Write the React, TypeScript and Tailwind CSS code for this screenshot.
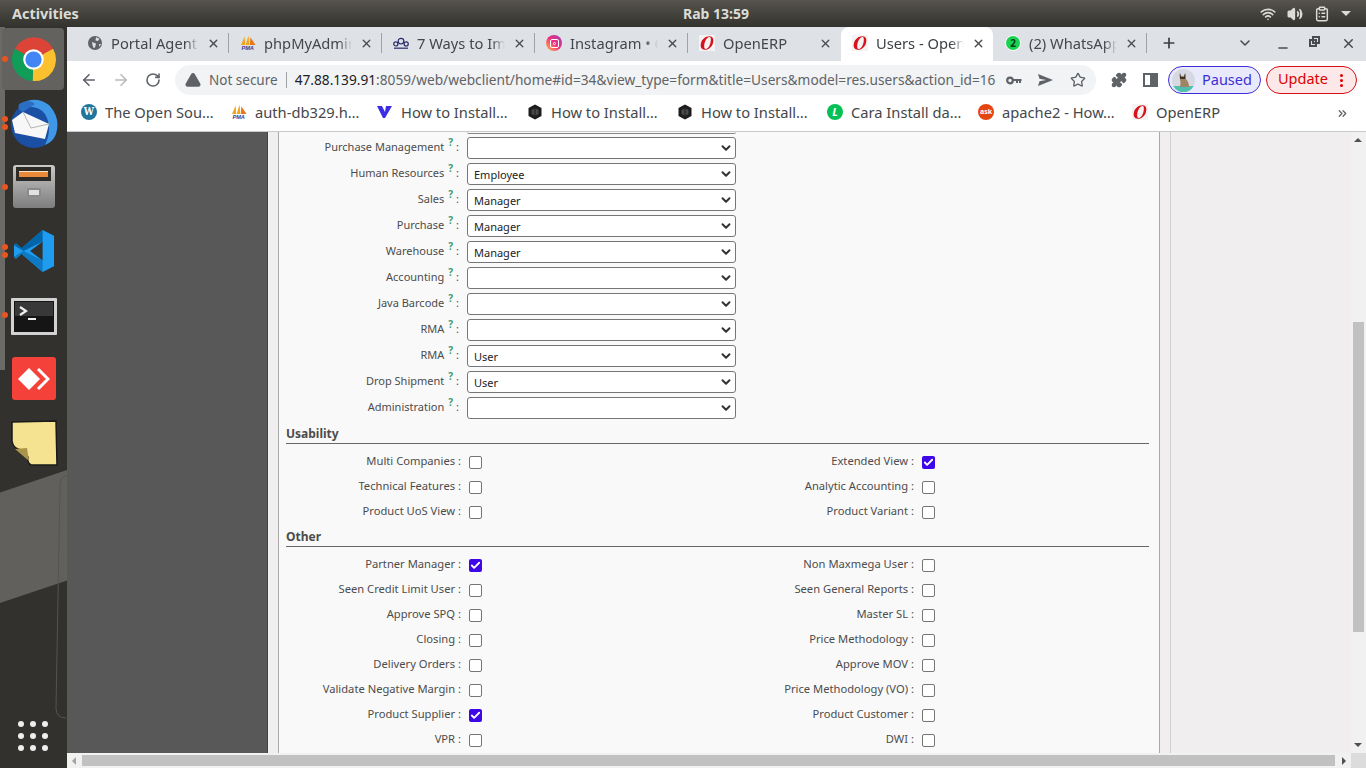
import React from 'react';
import { ArrowLeft, ArrowRight, RotateCw, X, Plus, ChevronDown, Minus, Star, Puzzle, ChevronsRight, TriangleAlert, Wifi, Volume2, ClipboardList, Check } from 'lucide-react';

const font = 'font-["Noto_Sans","Open_Sans",sans-serif]';

const OperaLogo = () => (
    <svg width="16" height="16" viewBox="0 0 16 16" className="shrink-0">
        <rect width="16" height="16" fill="#f3f3f3" />
        <path fillRule="evenodd" fill="#d8111b" d="M10.5 1.2 C14 1.2 15 4.2 14 8 C13 12 9.5 15 6 14.8 C2.2 14.6 1 11.6 2 8 C3 4 6.5 1.2 10.5 1.2Z M10.6 2 C8.6 2 6.6 4.6 5.6 8 C4.8 11 5.2 14 6.6 14 C8.6 14 10.6 11.4 11.4 8 C12.2 5 12 2 10.6 2Z" />
    </svg>
);

const PmaLogo = () => (
    <svg width="16" height="16" viewBox="0 0 17 16" className="shrink-0">
        <path d="M1 10 L5 1 L5.5 10Z M6 10 L9 0 L10 10Z" fill="#f2a51f" />
        <path d="M10.5 10 L11 2 L16.5 10Z" fill="#e8761a" />
        <text x="1.5" y="15.5" fontSize="6" fontWeight="700" fontStyle="italic" fill="#3b3b8c" fontFamily="Liberation Sans, sans-serif">PMA</text>
    </svg>
);

const HexLogo = () => (
    <svg width="16" height="16" viewBox="0 0 15 16" className="shrink-0">
        <path d="M7.5 0.5 L14 4 V12 L7.5 15.5 L1 12 V4Z" fill="#1c1c1c" />
        <path d="M7.5 4 L11 6 V10 L7.5 12 L4 10 V6Z" fill="#4a4a4a" />
        <path d="M7.5 4V12" stroke="#1c1c1c" />
    </svg>
);

const CrownLogo = () => (
    <svg width="16" height="14" viewBox="0 0 17 14" fill="none" stroke="#2b2b6b" strokeWidth="1.3" className="shrink-0">
        <circle cx="8.5" cy="5" r="3" />
        <circle cx="3" cy="8" r="2.2" />
        <circle cx="14" cy="8" r="2.2" />
        <path d="M1 12.5h15" />
    </svg>
);

const GlobeLogo = () => (
    <div className="w-4 flex justify-center shrink-0">
        <svg width="14" height="14" viewBox="0 0 14 14">
            <circle cx="7" cy="7" r="7" fill="#5f6368" />
            <path d="M8 1.2 L11.5 2.8 L10 5 L7.5 4.5Z M4 6 L8 7.5 L7 11.5 L5.5 12 L4.5 9Z M11 8 L13 8 L11.5 11Z" fill="#dee1e6" />
        </svg>
    </div>
);

const InstaLogo = () => (
    <div className="w-4 h-4 rounded-full bg-gradient-to-tr from-[#fdb515] via-[#ee2a7b] to-[#9b36b7] flex items-center justify-center shrink-0">
        <div className="w-[9px] h-[9px] rounded-[2px] border border-white flex items-center justify-center">
            <div className="w-[3px] h-[3px] rounded-full border border-white" />
        </div>
    </div>
);

const WhatsLogo = () => (
    <div className="w-4 h-4 rounded-full bg-[#19d24f] border border-white flex items-center justify-center text-[#0b3d1c] text-[10px] font-bold leading-none shrink-0">2</div>
);

const tabs: { title: string; icon: React.ReactNode; sep?: boolean; active?: boolean }[] = [
    { title: 'Portal Agent', icon: <GlobeLogo />, sep: true },
    { title: 'phpMyAdmin', icon: <PmaLogo />, sep: true },
    { title: '7 Ways to Imp', icon: <CrownLogo />, sep: true },
    { title: 'Instagram • C', icon: <InstaLogo />, sep: true },
    { title: 'OpenERP', icon: <OperaLogo /> },
    { title: 'Users - Open', icon: <OperaLogo />, active: true },
    { title: '(2) WhatsApp', icon: <WhatsLogo />, sep: true },
];

const bookmarks: { title: string; icon: React.ReactNode; width: string }[] = [
    { title: 'The Open Sou…', icon: <div className="w-4 h-4 rounded-full bg-[#21759b] text-white text-[11px] font-bold leading-4 text-center font-serif shrink-0">W</div>, width: 'w-[150px]' },
    { title: 'auth-db329.h…', icon: <PmaLogo />, width: 'w-[146px]' },
    { title: 'How to Install…', icon: <svg width="16" height="14" viewBox="0 0 16 14" className="shrink-0"><path d="M0 1h5l3 6 1-6h6l-7 12H6Z" fill="#3d2ee6" /></svg>, width: 'w-[150px]' },
    { title: 'How to Install…', icon: <HexLogo />, width: 'w-[150px]' },
    { title: 'How to Install…', icon: <HexLogo />, width: 'w-[150px]' },
    { title: 'Cara Install da…', icon: <div className="w-4 h-4 rounded-full bg-[#06bf55] text-white text-[11px] font-bold italic leading-4 text-center shrink-0">L</div>, width: 'w-[151px]' },
    { title: 'apache2 - How…', icon: <div className="w-4 h-4 rounded-full bg-[#e5450f] text-white text-[7px] font-bold leading-4 text-center shrink-0">ask</div>, width: 'w-[154px]' },
    { title: 'OpenERP', icon: <OperaLogo />, width: 'w-[110px]' },
];

const selects = [
    { label: 'Purchase Management', value: '' },
    { label: 'Human Resources', value: 'Employee' },
    { label: 'Sales', value: 'Manager' },
    { label: 'Purchase', value: 'Manager' },
    { label: 'Warehouse', value: 'Manager' },
    { label: 'Accounting', value: '' },
    { label: 'Java Barcode', value: '' },
    { label: 'RMA', value: '' },
    { label: 'RMA', value: 'User' },
    { label: 'Drop Shipment', value: 'User' },
    { label: 'Administration', value: '' },
];

type Box = [string, boolean];

const usability: [Box, Box][] = [
    [['Multi Companies', false], ['Extended View', true]],
    [['Technical Features', false], ['Analytic Accounting', false]],
    [['Product UoS View', false], ['Product Variant', false]],
];

const other: [Box, Box][] = [
    [['Partner Manager', true], ['Non Maxmega User', false]],
    [['Seen Credit Limit User', false], ['Seen General Reports', false]],
    [['Approve SPQ', false], ['Master SL', false]],
    [['Closing', false], ['Price Methodology', false]],
    [['Delivery Orders', false], ['Approve MOV', false]],
    [['Validate Negative Margin', false], ['Price Methodology (VO)', false]],
    [['Product Supplier', true], ['Product Customer', false]],
    [['VPR', false], ['DWI', false]],
];

const Checkbox = ({ checked }: { checked: boolean }) => (
    <div className={`w-[13px] h-[13px] rounded-[2px] flex items-center justify-center ${checked ? 'bg-[#3d07e8]' : 'border border-[#767676] bg-white'}`}>
        {checked && <Check size={11} strokeWidth={4} className="text-white" />}
    </div>
);

const CheckCell = ({ label, checked }: { label: string; checked: boolean }) => (
    <div className="flex items-center h-[25px]">
        <div className="w-[190px] text-right text-[11.2px] text-[#4c4c4c] pr-[8px] -mt-[2px]">{label} :</div>
        <Checkbox checked={checked} />
    </div>
);

const Section = ({ title, rows }: { title: string; rows: [Box, Box][] }) => (
    <div>
        <div className="h-[19px] mr-[10px] ml-[7px] border-b border-[#666] text-[12px] font-bold text-[#4c4c4c] leading-[18px]">{title}</div>
        <div className="pt-[6px]">
            {rows.map(([left, right]) => (
                <div key={left[0]} className="flex">
                    <div className="w-[453px]">
                        <CheckCell label={left[0]} checked={left[1]} />
                    </div>
                    <CheckCell label={right[0]} checked={right[1]} />
                </div>
            ))}
        </div>
    </div>
);

const Dock = () => (
    <div className="w-[67px] shrink-0 bg-[#32312d] flex flex-col items-center relative overflow-hidden">
        <div className="absolute left-0 right-0 top-[443px] h-[133px] bg-[#61605c] [clip-path:polygon(0_17%,100%_0,100%_83%,0_100%)]" />
        <svg width="67" height="260" viewBox="0 0 67 260" fill="none" className="absolute left-0 top-[445px]">
            <path d="M67 4 Q60 4 60 14 L56 236 Q56 246 66 246" stroke="#55544f" />
        </svg>
        <div className="absolute left-0 top-0 h-[343px] w-[5px] bg-[#6b6a66]" />
        <div className="absolute left-[2px] top-[1px] w-[62px] h-[62px] rounded-[4px] bg-[#63625e]" />
        <span className="absolute left-[2px] top-[29px] w-[6px] h-[6px] rounded-full bg-[#e95420]" />
        <span className="absolute left-[2px] top-[89px] w-[6px] h-[6px] rounded-full bg-[#e95420]" />
        <span className="absolute left-[2px] top-[97px] w-[6px] h-[6px] rounded-full bg-[#e95420]" />
        <span className="absolute left-[2px] top-[157px] w-[6px] h-[6px] rounded-full bg-[#e95420]" />
        <span className="absolute left-[2px] top-[217px] w-[6px] h-[6px] rounded-full bg-[#e95420]" />
        <span className="absolute left-[2px] top-[225px] w-[6px] h-[6px] rounded-full bg-[#e95420]" />
        <span className="absolute left-[2px] top-[285px] w-[6px] h-[6px] rounded-full bg-[#e95420]" />

        <svg width="45" height="45" viewBox="0 0 46 46" className="relative mt-[10px]">
            <path d="M23 23 L4 12 A22 22 0 0 1 43 12 Z" fill="#db4437" />
            <path d="M23 23 L43 12 A22 22 0 0 1 22 45 Z" fill="#fbc02d" />
            <path d="M23 23 L22 45 A22 22 0 0 1 4 12 Z" fill="#0f9d58" />
            <circle cx="23" cy="23" r="10.5" fill="#fff" />
            <circle cx="23" cy="23" r="8.3" fill="#4285f4" />
        </svg>
        <svg width="50" height="50" viewBox="0 0 50 50" className="relative mt-[16px]">
            <circle cx="25" cy="27" r="23" fill="#1a4fa3" />
            <path d="M12 6 Q26 -3 40 7 Q52 20 47 36 Q44 44 36 47 Q44 30 36 16 Q28 6 12 10Z" fill="#3f97e6" />
            <path d="M10 6 Q20 0 26 6 L14 14 Q8 12 10 6Z" fill="#2b6fc4" />
            <path d="M3 22 L14 14 L40 26 L36 41 L6 35Z" fill="#f7f7f7" />
            <path d="M14 14 L22 30 L40 26" fill="none" stroke="#b5b5b5" />
        </svg>
        <div className="relative mt-[17px] w-[42px] h-[43px] rounded-[3px] bg-gradient-to-b from-[#c9c9c9] to-[#7e7e7e] flex flex-col items-center">
            <div className="w-[35px] h-[14px] mt-[2px] bg-[#2e2a26] px-[3px] pt-[4px]"><div className="h-[6px] bg-[#e98a3a] border-t border-[#f5e2c8]" /></div>
            <div className="w-[14px] h-[9px] mt-[7px] bg-[#e2e2e2] border-2 border-[#8a8a8a] rounded-[2px]" />
        </div>
        <svg width="42" height="42" viewBox="0 0 42 44" className="relative mt-[22px]">
            <path d="M30 0 L42 6 V38 L30 44 L8 25 L2 30 L0 28 V16 L2 14 L8 19Z M30 12 L17 22 L30 32Z" fill="#1f9cf0" fillRule="evenodd" />
            <path d="M30 0 L8 19 L2 14 L0 16 L10 22 L30 12Z" fill="#0065a9" />
            <path d="M30 44 L8 25 L2 30 L0 28 L10 22 L30 32Z" fill="#0e7ac4" />
        </svg>
        <svg width="46" height="37" viewBox="0 0 46 37" className="relative mt-[26px]">
            <rect width="46" height="37" rx="1" fill="#d2d2d2" />
            <rect x="3" y="3" width="40" height="31" fill="#151515" />
            <rect x="4" y="4" width="38" height="14" fill="#383838" />
            <path d="M9 9 L15 13 L9 17" fill="none" stroke="#eee" strokeWidth="2.2" />
            <path d="M17 21h8" stroke="#eee" strokeWidth="2" />
        </svg>
        <div className="relative mt-[22px] w-[44px] h-[43px] rounded-[3px] bg-[#f4413a] flex items-center justify-center">
            <svg width="32" height="22" viewBox="0 0 32 22">
                <path d="M11 0 L22 11 L11 22 L0 11Z" fill="#fff" />
                <path d="M20 1 L30 11 L20 21" fill="none" stroke="#fff" strokeWidth="3" />
            </svg>
        </div>
        <svg width="48" height="46" viewBox="0 0 48 46" className="relative mt-[20px]">
            <path d="M2 2 L46 1 L47 45 L21 45 Q17 43 18 37 Q14 30 8 29 Q3 27 2 21Z" fill="#f5e392" stroke="#1a1a1a" strokeWidth="1.5" />
            <path d="M5 29 L17 28 L19 41Z" fill="#a8954a" />
        </svg>
        <div className="absolute left-[18px] bottom-[17px] grid grid-cols-3 gap-x-[6px] gap-y-[6px]">
            {Array.from({ length: 9 }).map((_, i) => (
                <div key={i} className="w-[6px] h-[6px] rounded-full bg-[#eeeeee]" />
            ))}
        </div>
    </div>
);

export default function App() {
    return (
        <div className={`w-[1366px] h-[768px] overflow-hidden flex flex-col ${font}`}>
            {/* gnome top bar */}
            <div className="h-[27px] shrink-0 bg-gradient-to-b from-[#56544c] to-[#33322e] flex items-center justify-between pl-3 pr-[15px] text-[#dcdcd6] text-[14.4px] font-bold relative">
                <span className="pt-[1px]">Activities</span>
                <span className="absolute left-[683px] top-[3px] text-[14px]">Rab 13:59</span>
                <div className="flex items-center gap-[11px]">
                    <Wifi size={16} strokeWidth={2.5} />
                    <Volume2 size={16} strokeWidth={2.5} fill="#dcdcd6" />
                    <ClipboardList size={16} strokeWidth={2.2} />
                    <div className="w-0 h-0 border-x-[5px] border-x-transparent border-t-[5px] border-t-[#dcdcd6]" />
                </div>
            </div>

            <div className="flex-1 flex min-h-0">
                <Dock />

                {/* browser window */}
                <div className="flex-1 flex flex-col min-w-0">
                    <div className="h-[34px] shrink-0 bg-[#dee1e6] flex items-center pl-[9px] relative">
                        {tabs.map((t) => (
                            <React.Fragment key={t.title}>
                                <div className={`w-[152px] h-[34px] flex items-center gap-[8px] pl-[11px] pr-[8px] pb-[2px] text-[14.7px] ${t.active ? 'bg-white rounded-t-[8px] text-[#3c4043]' : 'text-[#45474a]'}`}>
                                    {t.icon}
                                    <span className="flex-1 overflow-hidden whitespace-nowrap [mask-image:linear-gradient(to_right,black_85%,transparent)]">{t.title}</span>
                                    <X size={13} strokeWidth={2.5} className="shrink-0 text-[#4a4c50]" />
                                </div>
                                <div className={`w-px h-[20px] shrink-0 -mt-[2px] ${t.sep ? 'bg-[#9fa2a6]' : ''}`} />
                            </React.Fragment>
                        ))}
                        <Plus size={16} strokeWidth={2.6} className="ml-[14px] mb-[2px] text-[#3c4043]" />
                        <ChevronDown size={16} strokeWidth={2.4} className="absolute left-[1170px] top-[8px] text-[#4a4c50]" />
                        <Minus size={14} strokeWidth={2.4} className="absolute left-[1209px] top-[14px] text-[#4a4c50]" />
                        <div className="absolute left-[1242px] top-[12px] w-[8px] h-[8px] border-2 border-[#4a4c50] bg-[#dee1e6]" />
                        <div className="absolute left-[1245px] top-[9px] w-[8px] h-[8px] border-2 border-[#4a4c50]" />
                        <X size={15} strokeWidth={2.4} className="absolute left-[1274px] top-[9px] text-[#4a4c50]" />
                    </div>

                    <div className="h-[38px] shrink-0 bg-white flex items-center text-[#5f6368]">
                        <ArrowLeft size={18} strokeWidth={2.2} className="ml-[13px]" />
                        <ArrowRight size={18} strokeWidth={2.2} className="ml-[14px] text-[#b8bbbf]" />
                        <RotateCw size={16} strokeWidth={2.4} className="ml-[15px]" />
                        <div className="ml-[14px] w-[921px] h-[30px] rounded-full bg-[#f1f3f4] flex items-center pl-[10px] pr-[10px]">
                            <TriangleAlert size={16} strokeWidth={2.6} fill="#5f6368" stroke="#5f6368" className="shrink-0" />
                            <span className="ml-[8px] text-[13.5px]">Not secure</span>
                            <div className="w-px h-[16px] bg-[#a0a3a7] mx-[8px]" />
                            <span className="whitespace-nowrap text-[13.7px]"><span className="text-[#202124]">47.88.139.91</span>:8059/web/webclient/home#id=34&amp;view_type=form&amp;title=Users&amp;model=res.users&amp;action_id=16</span>
                            <div className="flex-1" />
                            <svg width="16" height="9" viewBox="0 0 16 9" className="shrink-0 mr-[16px]" fill="none" stroke="#5f6368">
                                <circle cx="4" cy="4.5" r="2.8" strokeWidth="2.2" />
                                <path d="M7 4h8.5M11 4v3M14 4v3" strokeWidth="2" />
                            </svg>
                            <svg width="15" height="12" viewBox="0 0 15 12" className="shrink-0" fill="#5f6368">
                                <path d="M0 0 L15 6 L0 12 L1.5 7.2 L8 6 L1.5 4.8Z" />
                            </svg>
                            <Star size={16} strokeWidth={2} className="ml-[17px] shrink-0" />
                        </div>
                        <Puzzle size={16} fill="#5f6368" className="ml-[15px]" />
                        <div className="ml-[16px] w-[15px] h-[14px] border-2 border-[#5f6368] flex justify-end"><div className="w-[6px] bg-[#5f6368]" /></div>
                        <div className="ml-[10px] w-[93px] h-[28px] rounded-full border border-[#3c2fd6] bg-[#e8eafb] flex items-center text-[14.5px] text-[#3c2fd6]">
                            <svg width="23" height="23" viewBox="0 0 23 23" className="ml-[3px] shrink-0 rounded-full">
                                <rect width="23" height="23" fill="#d7d8e2" />
                                <rect y="17" width="23" height="6" fill="#4dc0b0" />
                                <path d="M7 4 L9 7 H12 L14 4 L14 10 Q17 13 17 18 H8 Q9 13 8 10Z" fill="#9c8565" />
                                <path d="M8 4 L9 8 H12 L13 4 L13 10 H8Z" fill="#3f3226" />
                            </svg>
                            <span className="ml-[7px]">Paused</span>
                        </div>
                        <div className="ml-[5px] w-[91px] h-[28px] rounded-full border border-[#d60f0f] bg-[#fce8e8] flex items-center text-[14.5px] text-[#d00] pl-[11px]">
                            <span className="-mt-[2px]">Update</span>
                            <div className="ml-[12px] flex flex-col gap-[2px]">
                                <div className="w-[3px] h-[3px] rounded-full bg-[#d00]" />
                                <div className="w-[3px] h-[3px] rounded-full bg-[#d00]" />
                                <div className="w-[3px] h-[3px] rounded-full bg-[#d00]" />
                            </div>
                        </div>
                    </div>

                    <div className="h-[33px] shrink-0 bg-white border-b border-[#c8cacc] flex items-center pl-[14px] pb-[5px] text-[14.7px] text-[#45474a] relative">
                        {bookmarks.map((b, i) => (
                            <div key={i} className={`${b.width} flex items-center gap-[8px] whitespace-nowrap shrink-0`}>
                                {b.icon}
                                <span>{b.title}</span>
                            </div>
                        ))}
                        <ChevronsRight size={13} strokeWidth={2.4} className="absolute left-[1269px] top-[8px] text-[#5f6368]" />
                    </div>

                    {/* page */}
                    <div className="flex-1 flex min-h-0 relative overflow-hidden">
                        <div className="w-[200px] bg-[#595858] shrink-0 border-r border-[#444] box-content" />
                        <div className="w-[10px] bg-[#f0eeee] shrink-0 border-r border-[#a9a9a9] box-content" />
                        <div className="w-[880px] shrink-0 bg-[#f9f9f9] border-r border-[#a9a9a9] box-content overflow-hidden">
                            <div className="h-[2px] ml-[188px] w-[269px] border-b border-[#888] rounded-b-[3px]" />
                            <div className="pt-[3px]">
                                {selects.map((s, i) => (
                                    <div key={i} className="flex h-[26px] items-start">
                                        <div className="w-[182px] text-right text-[11px] text-[#4c4c4c] flex justify-end items-start whitespace-nowrap">
                                            <span className="mt-[2px]">{s.label}</span>
                                            <span className="text-[10px] font-bold text-[#3d9a73] ml-[4px] -mt-[2px]">?</span>
                                            <span className="mt-[2px] ml-[3px] mr-[2px]">:</span>
                                        </div>
                                        <div className="ml-[6px] w-[269px] h-[22px] rounded-[3px] border border-[#767676] bg-white flex items-center justify-between pl-[6px] pr-[2px] text-[11px] text-[#222]">
                                            <span className="pt-[3px]">{s.value}</span>
                                            <ChevronDown size={14} strokeWidth={3.4} className="text-[#333]" />
                                        </div>
                                    </div>
                                ))}
                            </div>
                            <div className="pt-[2px]">
                                <Section title="Usability" rows={usability} />
                            </div>
                            <div className="pt-[3px]">
                                <Section title="Other" rows={other} />
                            </div>
                        </div>
                        <div className="w-[10px] bg-[#f0eeee] shrink-0 border-r border-[#d0d0d0] box-content" />
                        <div className="flex-1 bg-[#f0eeee]" />
                        {/* vertical scrollbar */}
                        <div className="w-[15px] bg-[#f1f1f1] shrink-0 relative">
                            <div className="absolute left-[3px] top-[6px] w-0 h-0 border-x-[4px] border-x-transparent border-b-[4px] border-b-[#505050]" />
                            <div className="absolute left-[2px] right-[2px] top-[190px] h-[310px] bg-[#c1c1c1]" />
                            <div className="absolute left-[3px] bottom-[6px] w-0 h-0 border-x-[4px] border-x-transparent border-t-[4px] border-t-[#505050]" />
                        </div>
                    </div>
                    {/* horizontal scrollbar */}
                    <div className="h-[15px] shrink-0 bg-[#f1f1f1] flex items-center relative">
                        <div className="absolute left-[5px] w-0 h-0 border-y-[4px] border-y-transparent border-r-[4px] border-r-[#a3a3a3]" />
                        <div className="ml-[15px] w-[1253px] h-[11px] bg-[#c1c1c1]" />
                        <div className="ml-[7px] w-0 h-0 border-y-[4px] border-y-transparent border-l-[4px] border-l-[#505050]" />
                        <div className="absolute right-0 top-0 w-[15px] h-[15px] bg-[#dcdcdc]" />
                    </div>
                </div>
            </div>
        </div>
    );
}
